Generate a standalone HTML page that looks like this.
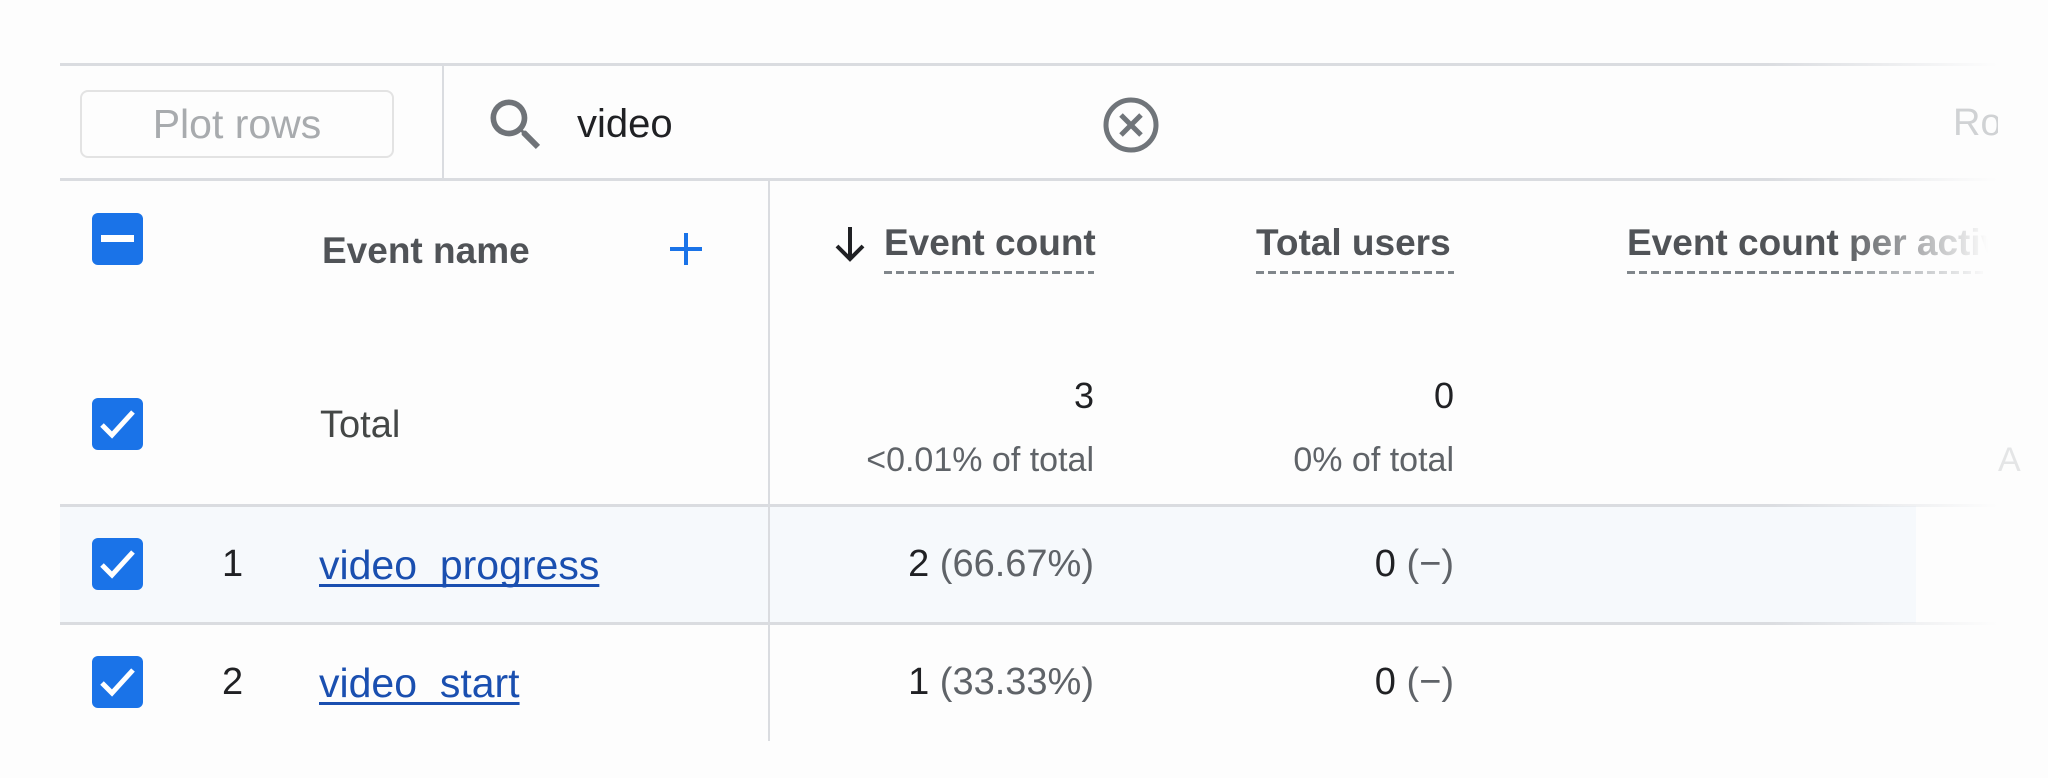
<!DOCTYPE html>
<html><head><meta charset="utf-8"><style>
body{margin:0;width:2048px;height:778px;background:#fdfdfd;position:relative;overflow:hidden;font-family:"Liberation Sans",Arial,sans-serif}
.a{position:absolute}
.hl{position:absolute;left:60px;width:1938px;height:3px;background:linear-gradient(to right,#dadce0 0,#dadce0 88%,rgba(218,220,224,0) 100%)}
.t{position:absolute;white-space:nowrap;line-height:1}
.cb{position:absolute;left:92px;width:51px;height:52px;background:#1a73e8;border-radius:6px}
.h{font-size:37px;color:#505357;font-weight:bold}
.dash{position:absolute;height:3px;background:repeating-linear-gradient(to right,#80868b 0 8px,transparent 8px 12px)}
.r{text-align:right}
.link{color:#1a4fb0;text-decoration:underline;text-decoration-thickness:3px;text-underline-offset:5px;text-decoration-skip-ink:none}
</style></head><body>
<div class="hl" style="top:63px"></div>
<div class="hl" style="top:178px"></div>
<div class="a" style="left:442px;top:64px;width:2px;height:115px;background:#dadce0"></div>
<div class="a" style="left:80px;top:90px;width:310px;height:64px;border:2px solid #e3e3e3;border-radius:8px"></div>
<div class="t" style="left:80px;width:314px;text-align:center;top:104px;font-size:41px;color:#a8abae">Plot rows</div>
<svg class="a" style="left:482px;top:91px" width="68" height="68" viewBox="0 0 24 24"><path fill="#6f7378" d="M15.5 14h-.79l-.28-.27A6.47 6.47 0 0016 9.5 6.5 6.5 0 109.5 16c1.61 0 3.09-.59 4.23-1.57l.27.28v.79l5 4.99L20.49 19l-4.99-5zm-6 0C7.010 14 5 11.99 5 9.5S7.01 5 9.5 5 14 7.01 14 9.5 11.99 14 9.5 14z"/></svg>
<div class="t" style="left:577px;top:104px;font-size:40px;color:#202124">video</div>
<svg class="a" style="left:1101px;top:95px" width="60" height="60" viewBox="0 0 60 60"><circle cx="30" cy="30" r="25" fill="none" stroke="#70757a" stroke-width="5"/><path d="M20 20L40 40M40 20L20 40" stroke="#70757a" stroke-width="5"/></svg>
<div class="t" style="left:1953px;top:104px;font-size:38px;color:#d0d2d4;width:45px;overflow:hidden">Row</div>
<div class="a" style="left:768px;top:179px;width:2px;height:562px;background:#dadce0"></div>
<div class="cb" style="top:213px"><div class="a" style="left:9px;top:22px;width:33px;height:7px;background:#fff"></div></div>
<div class="t h" style="left:322px;top:232px">Event name</div>
<svg class="a" style="left:668px;top:231px" width="36" height="36"><path d="M18 2V34M2 18H34" stroke="#1a73e8" stroke-width="4"/></svg>
<svg class="a" style="left:832px;top:225px" width="36" height="40"><path d="M18 2V34M5 21L18 34 31 21" fill="none" stroke="#202124" stroke-width="4"/></svg>
<div class="t h" style="left:884px;top:224px">Event count</div>
<div class="dash" style="left:884px;top:271px;width:210px"></div>
<div class="t h" style="left:1256px;top:224px">Total users</div>
<div class="dash" style="left:1256px;top:271px;width:198px"></div>
<div class="t h" style="left:1627px;top:224px;width:380px;overflow:hidden;-webkit-mask-image:linear-gradient(to right,#000 55%,transparent 95%)">Event count per active users</div>
<div class="dash" style="left:1627px;top:271px;width:380px;-webkit-mask-image:linear-gradient(to right,#000 55%,transparent 95%)"></div>
<div class="cb" style="top:398px"><svg width="51" height="52"><path d="M10 27L20 37 41 14" fill="none" stroke="#fff" stroke-width="5"/></svg></div>
<div class="t" style="left:320px;top:406px;font-size:38px;color:#444746">Total</div>
<div class="t r" style="left:894px;width:200px;top:378px;font-size:36px;color:#202124">3</div>
<div class="t r" style="left:794px;width:300px;top:443px;font-size:34px;color:#5f6368">&lt;0.01% of total</div>
<div class="t r" style="left:1254px;width:200px;top:378px;font-size:36px;color:#202124">0</div>
<div class="t r" style="left:1154px;width:300px;top:443px;font-size:34px;color:#5f6368">0% of total</div>
<div class="t" style="left:1998px;top:443px;font-size:34px;color:#e4e5e6">A</div>
<div class="a" style="left:60px;top:506px;width:1856px;height:117px;background:#f6f9fc"></div>
<div class="a" style="left:768px;top:505px;width:2px;height:236px;background:#dadce0"></div>
<div class="hl" style="top:504px"></div>
<div class="hl" style="top:622px"></div>
<div class="cb" style="top:538px"><svg width="51" height="52"><path d="M10 27L20 37 41 14" fill="none" stroke="#fff" stroke-width="5"/></svg></div>
<div class="t" style="left:222px;top:545px;font-size:38px;color:#202124">1</div>
<div class="t link" style="left:319px;top:545px;font-size:41px">video_progress</div>
<div class="t r" style="left:794px;width:300px;top:545px;font-size:38px;color:#202124">2 <span style="color:#5f6368">(66.67%)</span></div>
<div class="t r" style="left:1154px;width:300px;top:545px;font-size:38px;color:#202124">0 <span style="color:#5f6368">(−)</span></div>
<div class="cb" style="top:656px"><svg width="51" height="52"><path d="M10 27L20 37 41 14" fill="none" stroke="#fff" stroke-width="5"/></svg></div>
<div class="t" style="left:222px;top:663px;font-size:38px;color:#202124">2</div>
<div class="t link" style="left:319px;top:663px;font-size:41px">video_start</div>
<div class="t r" style="left:794px;width:300px;top:663px;font-size:38px;color:#202124">1 <span style="color:#5f6368">(33.33%)</span></div>
<div class="t r" style="left:1154px;width:300px;top:663px;font-size:38px;color:#202124">0 <span style="color:#5f6368">(−)</span></div>
</body></html>
